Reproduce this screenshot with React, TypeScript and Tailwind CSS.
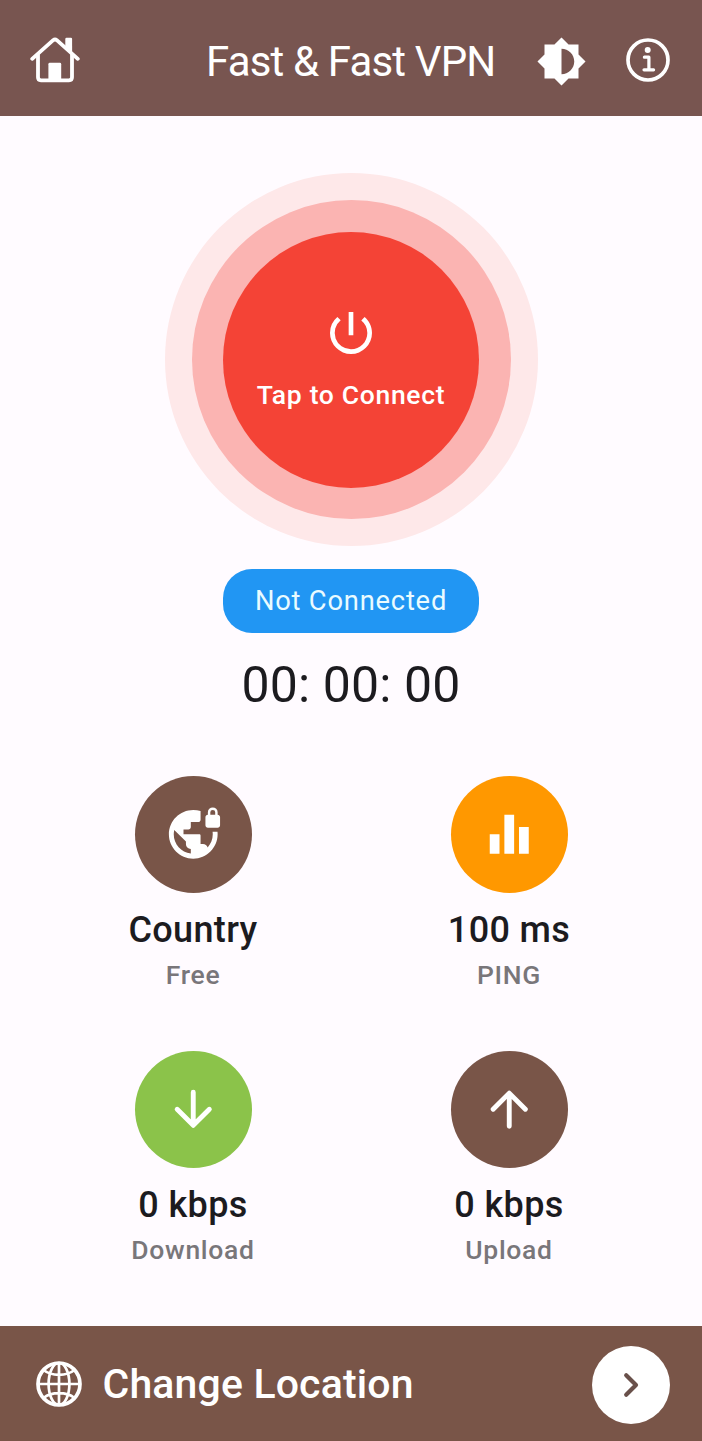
import type { ReactNode } from "react";
import { MdBrightnessMedium, MdEqualizer, MdPowerSettingsNew } from "react-icons/md";

function HomeIcon() {
  return (
    <svg width="50" height="46" viewBox="0 0 50 46" fill="none" stroke="currentColor" strokeLinecap="round" strokeLinejoin="round">
      <path d="M2.2 21.8 23.2 3.2q1.8-1.5 3.6 0L47.8 21.8" strokeWidth="3.8" />
      <path d="M8 18v22.3q0 3 3 3h28q3 0 3-3V18" strokeWidth="3.8" />
      <path d="M35.3 9V2q0-1.2 1.2-1.2h4.4q1.2 0 1.2 1.2v14.2z" fill="currentColor" stroke="none" />
      <path d="M18.400 44V27.200q0-1.400 1.400-1.400h10q1.400 0 1.400 1.400V44z" fill="currentColor" stroke="none" />
    </svg>
  );
}

function InfoIcon() {
  return (
    <svg width="44" height="44" viewBox="0 0 44 44" fill="none" stroke="currentColor">
      <circle cx="22" cy="22" r="20" strokeWidth="3.7" />
      <circle cx="21.7" cy="12" r="3" fill="currentColor" stroke="none" />
      <path d="M18.4 19.2h4.5v12.6M18 31.8h9.6" strokeWidth="3.2" strokeLinecap="round" strokeLinejoin="round" />
    </svg>
  );
}

function VpnLockIcon() {
  return (
    <svg width="58.5" height="58.5" viewBox="0 0 24 24" fill="currentColor">
      <path d="M19.92 11c.05.33.08.66.08 1 0 2.08-.8 3.97-2.1 5.39-.26-.81-1-1.39-1.9-1.39h-1v-3.5c0-.28-.22-.5-.5-.5H8v-2h2c.55 0 1-.45 1-1V7h3c.55 0 1-.45 1-1V2.46C14.05 2.16 13.05 2 12 2 6.48 2 2 6.48 2 12s4.48 10 10 10 10-4.48 10-10c0-.34-.02-.67-.05-1zM11 19.93c-3.95-.49-7-3.85-7-7.93 0-.62.08-1.21.21-1.79L9 15v1c0 1.1.9 2 2 2z" />
      <path d="M22 4V3a2 2 0 0 0-4 0v1c-.55 0-1 .45-1 1v3.300c0 .55.45 1 1 1h4c.55 0 1-.45 1-1V5c0-.55-.45-1-1-1zm-1 0h-2V3a1 1 0 0 1 2 0z" />
    </svg>
  );
}

function DownIcon() {
  return (
    <svg width="58.5" height="58.5" viewBox="0 0 24 24" fill="none" stroke="currentColor" strokeWidth="2" strokeLinecap="round" strokeLinejoin="round">
      <path d="M12 5v13M5.4 12 12 18.6l6.6-6.6" />
    </svg>
  );
}

function UpIcon() {
  return (
    <svg width="58.5" height="58.5" viewBox="0 0 24 24" fill="none" stroke="currentColor" strokeWidth="2" strokeLinecap="round" strokeLinejoin="round">
      <path d="M12 19V6M5.4 12 12 5.4l6.6 6.6" />
    </svg>
  );
}

function GlobeIcon() {
  return (
    <svg width="46" height="46" viewBox="0 0 46 46" fill="none" stroke="currentColor" strokeWidth="2.7">
      <circle cx="23" cy="23" r="21" strokeWidth="3.7" />
      <ellipse cx="23" cy="23" rx="10.4" ry="21" />
      <path d="M23 2v42M2 23h42M7.5 9q6 4.8 15.5 4.8T38.5 9M7.5 37q6-4.8 15.5-4.8T38.5 37" />
    </svg>
  );
}

function Stat({ color, icon, value, label }: { color: string; icon: ReactNode; value: string; label: string }) {
  return (
    <div className="flex h-[275px] flex-col items-center whitespace-nowrap">
      <div className={`flex size-[117px] items-center justify-center rounded-full text-white ${color}`}>{icon}</div>
      <div className="mt-4 text-[36px] leading-[42px] font-medium tracking-[0.35px] text-[#1c1b1f]">{value}</div>
      <div className="mt-2 text-[26.5px] leading-[32px] font-medium tracking-[0.7px] text-[#79767a]">{label}</div>
    </div>
  );
}

export default function App() {
  return (
    <div className="flex h-[1441px] w-[702px] flex-col bg-[#fffbff] font-[Roboto,sans-serif]">
      <header className="flex h-[116px] shrink-0 items-start bg-[#785550] text-white">
        <button className="mt-[37px] ml-[29.5px]" aria-label="Home"><HomeIcon /></button>
        <h1 className="mt-[37px] ml-[126.5px] w-[290px] text-[42px] leading-[50px] font-normal tracking-[-0.85px] whitespace-nowrap">Fast &amp; Fast VPN</h1>
        <button className="mt-[36px] ml-[40px]" aria-label="Theme"><MdBrightnessMedium size={51} /></button>
        <button className="mt-[38px] ml-[38.5px]" aria-label="Info"><InfoIcon /></button>
      </header>

      <main className="flex flex-1 flex-col items-center">
        <div className="mt-[57px] flex size-[373px] shrink-0 items-center justify-center rounded-full bg-[#fee8e9]">
          <div className="flex size-[319px] items-center justify-center rounded-full bg-[#fbb4b2]">
            <button className="flex size-[256px] flex-col items-center rounded-full bg-[#f44336] pt-[73px] text-white">
              <MdPowerSettingsNew size={56} />
              <span className="mt-[18.5px] text-[26.5px] leading-[32px] font-medium tracking-[0.68px] whitespace-nowrap">Tap to Connect</span>
            </button>
          </div>
        </div>
        <div className="mt-[23px] flex h-[64px] w-[256px] shrink-0 items-center justify-center rounded-[29px] bg-[#2196f3] text-[27.3px] leading-[32px] tracking-[0.8px] whitespace-nowrap text-[#e9fbff]">Not Connected</div>
        <div className="mt-[22px] h-[60px] text-[50px] leading-[60px] tracking-[0.15px] whitespace-nowrap text-[#1c1b1f]">00: 00: 00</div>
        <div className="mt-[61px] grid w-[632px] grid-cols-2">
          <Stat color="bg-[#795548]" icon={<VpnLockIcon />} value="Country" label="Free" />
          <Stat color="bg-[#ff9800]" icon={<MdEqualizer size={58.5} />} value="100 ms" label="PING" />
          <Stat color="bg-[#8bc34a]" icon={<DownIcon />} value="0 kbps" label="Download" />
          <Stat color="bg-[#795548]" icon={<UpIcon />} value="0 kbps" label="Upload" />
        </div>
      </main>

      <footer className="flex h-[115px] shrink-0 items-center bg-[#795548] pr-8 pl-9 text-white">
        <GlobeIcon />
        <span className="mt-[1px] ml-[20.5px] flex-1 text-[41px] leading-[50px] font-medium tracking-[0.15px] whitespace-nowrap">Change Location</span>
        <button className="mt-[2px] flex size-[78px] items-center justify-center rounded-full bg-white text-[#69504a]" aria-label="Open">
          <svg width="16" height="26" viewBox="0 0 16 26" fill="none" stroke="currentColor" strokeWidth="4.2" strokeLinecap="round" strokeLinejoin="round">
            <path d="m3.2 3.2 9.8 9.8-9.8 9.8" />
          </svg>
        </button>
      </footer>
    </div>
  );
}
